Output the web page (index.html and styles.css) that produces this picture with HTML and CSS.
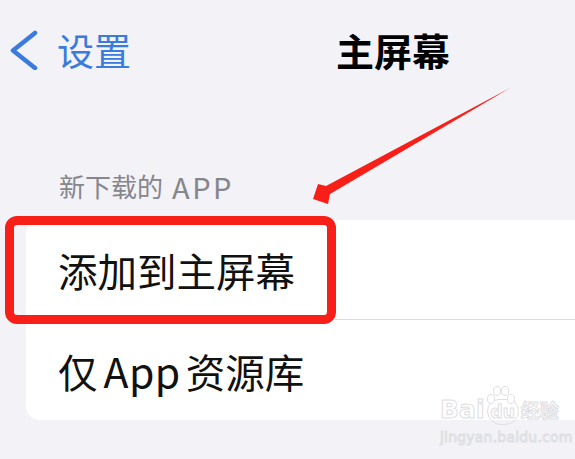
FILE: index.html
```html
<!DOCTYPE html>
<html lang="zh-CN">
<head>
    <meta charset="utf-8">
    <meta content="width=device-width, initial-scale=1.0" name="viewport">
    <title>主屏幕</title>
    <link rel="stylesheet" href="styles.css">
</head>
<body>

<div class="screen">
    <!-- nav bar -->
    <header class="nav">
        <a class="back" href="#">
            <svg class="chevron" width="40" height="40" viewBox="0 0 40 40">
                <polyline points="27,3 5,20.5 27,38" fill="none" stroke="currentColor" stroke-width="4.5" stroke-linecap="round" stroke-linejoin="round"/>
            </svg>
            <span>设置</span>
        </a>
        <h1 class="title">主屏幕</h1>
        <div></div>
    </header>

    <p class="section-label">新下载的<span class="latin">APP</span></p>

    <ul class="list">
        <li class="row">
            添加到主屏幕
            <span class="mark"></span>
        </li>
        <li class="row">仅<span class="latin">App</span>资源库</li>
    </ul>

    <!-- red pointer drawn over the page -->
    <svg class="pointer" width="575" height="459" viewBox="0 0 575 459">
        <polygon points="510,88 326,186 318,184 313,199 328,204 330,194" fill="#f71f17"/>
    </svg>

    <!-- watermark -->
    <div class="watermark">
        <div class="wm-logo">
            <span>Bai</span>
            <span class="wm-du">du</span>
            <span class="wm-cn">经验</span>
            <svg class="wm-paw" width="34" height="22" viewBox="0 0 34 22">
                <ellipse cx="7" cy="15" rx="3.5" ry="4.5" fill="#fff" stroke="#e0e0e4"/>
                <ellipse cx="13" cy="7" rx="3.5" ry="4.5" fill="#fff" stroke="#e0e0e4"/>
                <ellipse cx="21" cy="7" rx="3.5" ry="4.5" fill="#fff" stroke="#e0e0e4"/>
                <ellipse cx="27" cy="15" rx="3.5" ry="4.5" fill="#fff" stroke="#e0e0e4"/>
            </svg>
        </div>
        <div class="wm-url">jingyan.baidu.com</div>
    </div>
</div>

</body>
</html>
```

FILE: styles.css
```css
body {
    margin: 0;
    padding: 0;
    background-color: #f2f2f7;
    overflow: hidden;
    font-family: "Noto Sans CJK SC", "Noto Sans", sans-serif;
}

.screen {
    position: relative;
    width: 786px;
    height: 459px;
}

.nav {
    display: grid;
    grid-template-columns: 1fr auto 1fr;
    align-items: center;
    height: 100px;
    padding: 0 8px;
}

.back {
    display: flex;
    align-items: center;
    gap: 9px;
    color: #3a7bdc;
    text-decoration: none;
    font-size: 37px;
    line-height: 40px;
}

.chevron {
    display: block;
}

.title {
    margin: 0;
    font-size: 38px;
    font-weight: 700;
    line-height: 40px;
    color: #000;
}

.section-label {
    display: flex;
    align-items: center;
    height: 34px;
    margin: 69px 0 17px;
    padding-left: 59px;
    font-size: 26px;
    line-height: 34px;
    color: #86868b;
}

.section-label .latin {
    margin-left: 9px;
    font-size: 29px;
    letter-spacing: 2.5px;
    line-height: 34px;
}

.list {
    list-style: none;
    margin: 0 26px;
    padding: 0;
    background-color: #fff;
    border-radius: 14px;
}

.row {
    position: relative;
    display: flex;
    align-items: center;
    height: 100px;
    padding-left: 32px;
    font-size: 39.5px;
    color: #111;
}

.row .latin {
    margin: 0 5px 0 6px;
    font-size: 41px;
    letter-spacing: 0.5px;
}

.row:first-child {
    height: 99px;
    border-bottom: 1px solid #dcdce0;
}

/* red highlight round the first row */
.mark {
    position: absolute;
    left: -21px;
    top: -4px;
    width: 313px;
    height: 90px;
    border: 9px solid #f71f17;
    border-radius: 12px;
}

.pointer {
    position: absolute;
    left: 0;
    top: 0;
}

.watermark {
    position: absolute;
    left: 440px;
    top: 384px;
    font-family: "DejaVu Sans", sans-serif;
    color: #fff;
    -webkit-text-stroke: 1px #dedee2;
}

.wm-logo {
    position: relative;
    display: flex;
    align-items: baseline;
    padding-top: 14px;
    font-size: 25px;
    font-weight: 700;
    line-height: 24px;
}

.wm-du {
    font-size: 17px;
    margin-left: 2px;
    padding: 0 3px;
    border: 1px solid #e0e0e4;
    border-radius: 12px 12px 14px 14px;
}

.wm-cn {
    font-family: "Noto Sans CJK SC", sans-serif;
    font-size: 19px;
    margin-left: 2px;
}

.wm-paw {
    position: absolute;
    left: 44px;
    top: 0;
}

.wm-url {
    margin-top: 4px;
    font-size: 14px;
    line-height: 16px;
    letter-spacing: 0.2px;
}
```
